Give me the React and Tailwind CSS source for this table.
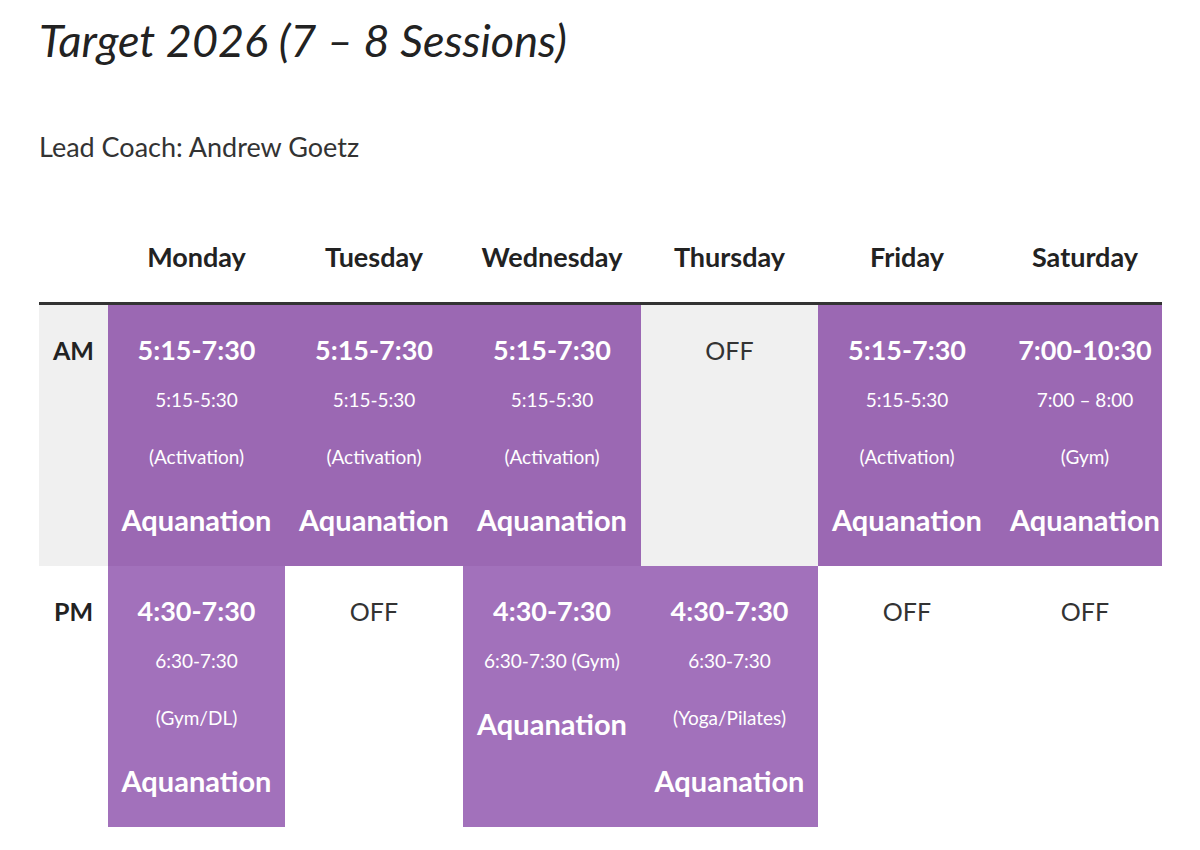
import React from "react";

const AM = "bg-[#9b68b3]";
const PM = "bg-[#a271bb]";

function Cell({ bg, time, smalls = [], aqua = true, off = false }) {
  if (off) {
    return (
      <div className={`${bg} flex flex-col items-center pt-[27px]`}>
        <div className="text-[25px] leading-[36px] text-[#333]">OFF</div>
      </div>
    );
  }
  const gaps = ["mt-[14px]", "mt-[21px]"];
  return (
    <div className={`${bg} flex flex-col items-center pt-[27px] text-white`}>
      <div className="font-bold text-[27px] leading-[36px]">{time}</div>
      {smalls.map((s, i) => (
        <div key={i} className={`${gaps[i]} text-[19px] leading-[36px] whitespace-nowrap`}>
          {s}
        </div>
      ))}
      {aqua && (
        <div className="mt-[25px] font-bold text-[29px] leading-[40px] whitespace-nowrap">Aquanation</div>
      )}
    </div>
  );
}

export default function App() {
  const days = ["Monday", "Tuesday", "Wednesday", "Thursday", "Friday", "Saturday"];
  return (
    <div className="w-[1200px] h-[850px] bg-white text-[#333] px-[39px]" style={{ fontFamily: "Lato, 'Noto Sans', sans-serif" }}>
      <h1 className="pt-[12px] italic text-[45px] leading-[56px] text-[#222] font-normal">
        Target 2026 (7 – 8 Sessions)
      </h1>
      <p className="mt-[64px] text-[27px] leading-[30px]">Lead Coach: Andrew Goetz</p>
      <div className="mt-[71px] w-[1123px] overflow-hidden">
        <div className="w-[1135px] grid grid-cols-[69px_177px_178px_178px_177px_178px_178px]">
          <div className="h-[72px] border-b-[3px] border-[#333]"></div>
          {days.map((d) => (
            <div key={d} className="h-[72px] border-b-[3px] border-[#333] flex justify-center pt-[8px] font-bold text-[27px] leading-[32px] text-[#222]">
              {d}
            </div>
          ))}
          {/* AM row */}
          <div className="h-[261px] bg-[#f0f0f0] flex justify-center pt-[27px]">
            <div className="font-bold text-[25px] leading-[36px] text-[#222]">AM</div>
          </div>
          <Cell bg={AM} time="5:15-7:30" smalls={["5:15-5:30", "(Activation)"]} />
          <Cell bg={AM} time="5:15-7:30" smalls={["5:15-5:30", "(Activation)"]} />
          <Cell bg={AM} time="5:15-7:30" smalls={["5:15-5:30", "(Activation)"]} />
          <Cell bg="bg-[#f0f0f0]" off />
          <Cell bg={AM} time="5:15-7:30" smalls={["5:15-5:30", "(Activation)"]} />
          <Cell bg={AM} time="7:00-10:30" smalls={["7:00 – 8:00", "(Gym)"]} />
          {/* PM row */}
          <div className="h-[261px] bg-white flex justify-center pt-[27px]">
            <div className="font-bold text-[25px] leading-[36px] text-[#222]">PM</div>
          </div>
          <Cell bg={PM} time="4:30-7:30" smalls={["6:30-7:30", "(Gym/DL)"]} />
          <Cell bg="bg-white" off />
          <Cell bg={PM} time="4:30-7:30" smalls={["6:30-7:30 (Gym)"]} />
          <Cell bg={PM} time="4:30-7:30" smalls={["6:30-7:30", "(Yoga/Pilates)"]} />
          <Cell bg="bg-white" off />
          <Cell bg="bg-white" off />
        </div>
      </div>
    </div>
  );
}
